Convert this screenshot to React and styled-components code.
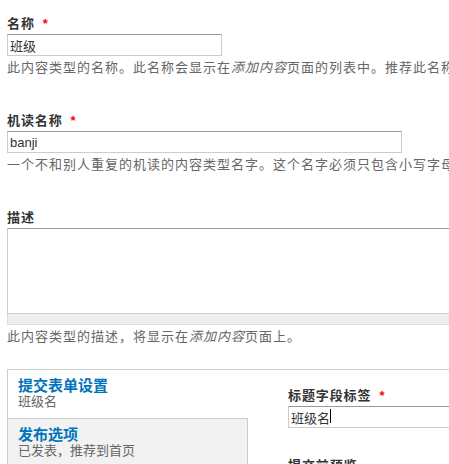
import React from 'react'
import styled, { createGlobalStyle } from 'styled-components'

const GlobalStyle = createGlobalStyle`
  html, body {
    margin: 0;
    padding: 0;
    background: #fff;
    overflow: hidden;
  }
  body {
    font-family: "Noto Sans CJK SC", sans-serif;
    font-size: 13px;
    color: #333;
  }
`

const Page = styled.div`
  width: 1000px;
  padding: 14px 0 0 7px;
`

const FormItem = styled.div`
  margin-bottom: ${(p) => p.$gap || 0}px;
`

const Label = styled.label`
  display: block;
  font-weight: bold;
  line-height: 18px;
  margin-bottom: 2px;
  letter-spacing: 0.9px;
  color: #333;
`

const Required = styled.span`
  margin-left: 8px;
  line-height: 0;
  color: #f00;
  font-family: "Liberation Sans", sans-serif;
  font-weight: bold;
`

const InputWrap = styled.div`
  position: relative;
`

const TextInput = styled.input`
  display: block;
  box-sizing: border-box;
  width: ${(p) => p.$width || '100%'};
  height: 22px;
  margin: 0;
  padding: 0 2px;
  border: 1px solid #ccc;
  border-top-color: #999;
  border-radius: 0;
  font: 13px "Liberation Sans", "Noto Sans CJK SC", sans-serif;
  color: #333;
  outline: none;
  background: #fff;
`

const Caret = styled.span`
  position: absolute;
  left: ${(p) => p.$left}px;
  top: 3px;
  width: 1px;
  height: 14px;
  background: #000;
`

const TextArea = styled.textarea`
  display: block;
  box-sizing: border-box;
  width: 100%;
  height: 86px;
  margin: 0;
  padding: 2px;
  border: 1px solid #ccc;
  border-top-color: #999;
  border-radius: 0;
  resize: none;
  outline: none;
  font: 13px "Liberation Sans", "Noto Sans CJK SC", sans-serif;
`

const Grippie = styled.div`
  box-sizing: border-box;
  height: 11px;
  background: #eee;
  border: 1px solid #ddd;
  border-top: none;
`

const Description = styled.div`
  margin-top: 2px;
  line-height: 18px;
  color: #666;
  letter-spacing: 1px;
  white-space: nowrap;

  em {
    font-style: italic;
  }
`

const VerticalTabs = styled.div`
  display: flex;
  margin-top: 24px;
  border: 1px solid #ccc;
  min-height: 200px;
`

const TabList = styled.ul`
  list-style: none;
  margin: 0;
  padding: 0;
  width: 240px;
  flex-shrink: 0;
`

const TabButton = styled.li`
  box-sizing: border-box;
  padding: 6px 10px 10px;
  background: ${(p) => (p.$selected ? '#fff' : '#f2f2f2')};
  border-top: ${(p) => (p.$first ? 'none' : '1px solid #ccc')};
  border-right: ${(p) => (p.$selected ? 'none' : '1px solid #ccc')};
`

const TabTitle = styled.strong`
  display: block;
  font-size: 15px;
  line-height: 17px;
  color: #0074bd;
`

const TabSummary = styled.span`
  display: block;
  font-size: 13px;
  line-height: 15px;
  color: #666;
`

const Pane = styled.div`
  flex: 1;
  padding: 16px 0 0 40px;
`

const tabs = [
  { title: '提交表单设置', summary: '班级名', selected: true },
  { title: '发布选项', summary: '已发表，推荐到首页' },
]

export default function App() {
  return (
    <>
      <GlobalStyle />
      <Page>
        <FormItem $gap={35}>
          <Label>
            名称<Required>*</Required>
          </Label>
          <TextInput $width="215px" defaultValue="班级" />
          <Description>
            此内容类型的名称。此名称会显示在<em>添加内容</em>页面的列表中。推荐此名称以大写字母开头并且只包含字母、数字和空格。此名称必须是唯一的。
          </Description>
        </FormItem>

        <FormItem $gap={35}>
          <Label>
            机读名称<Required>*</Required>
          </Label>
          <TextInput $width="395px" defaultValue="banji" />
          <Description>
            一个不和别人重复的机读的内容类型名字。这个名字必须只包含小写字母、数字和下划线。下划线将被转换为连字符。
          </Description>
        </FormItem>

        <FormItem>
          <Label>描述</Label>
          <TextArea />
          <Grippie />
          <Description>
            此内容类型的描述，将显示在<em>添加内容</em>页面上。
          </Description>
        </FormItem>

        <VerticalTabs>
          <TabList>
            {tabs.map((t, i) => (
              <TabButton key={t.title} $selected={t.selected} $first={i === 0}>
                <TabTitle>{t.title}</TabTitle>
                <TabSummary>{t.summary}</TabSummary>
              </TabButton>
            ))}
          </TabList>
          <Pane>
            <FormItem $gap={28}>
              <Label>
                标题字段标签<Required>*</Required>
              </Label>
              <InputWrap>
                <TextInput defaultValue="班级名" />
                <Caret $left={42} />
              </InputWrap>
            </FormItem>
            <FormItem>
              <Label>提交前预览</Label>
            </FormItem>
          </Pane>
        </VerticalTabs>
      </Page>
    </>
  )
}
